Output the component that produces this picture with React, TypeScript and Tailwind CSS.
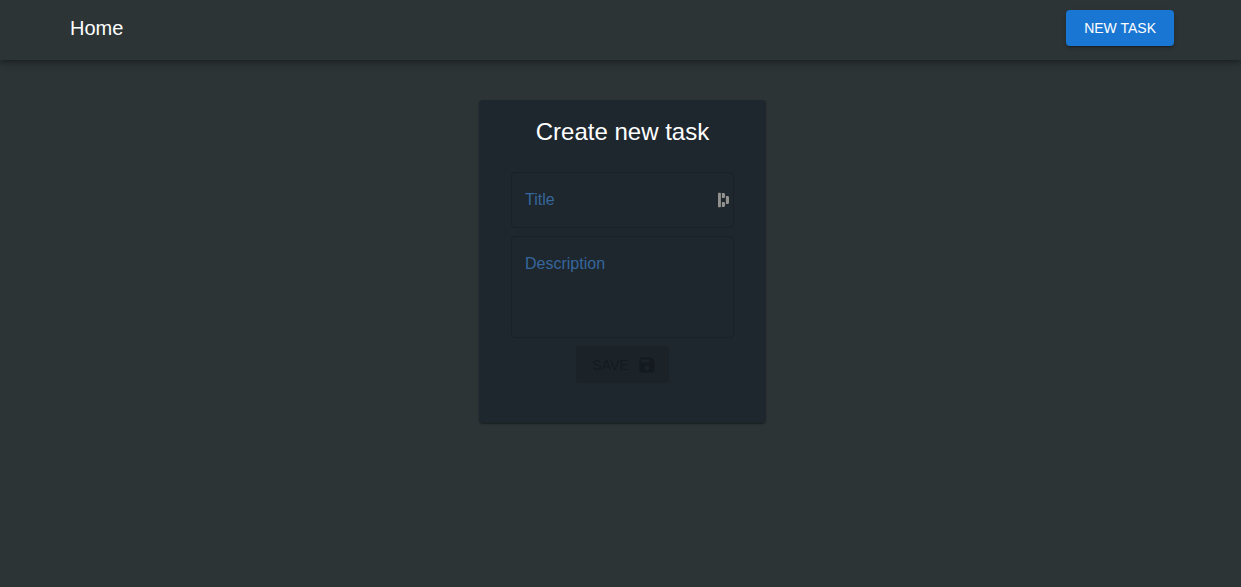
import { useState } from "react";
import type { FormEvent } from "react";

function Navbar() {
  return (
    <header className="bg-[#2d3436] pl-[3px] shadow-[0_2px_4px_-1px_rgba(0,0,0,0.2),0_4px_5px_0_rgba(0,0,0,0.14),0_1px_10px_0_rgba(0,0,0,0.12)]">
      <div className="mx-auto flex max-w-[1200px] items-start justify-between px-12 pt-2.5 pb-3.5">
        <a href="/" className="text-xl leading-9 text-white">
          Home
        </a>
        <button
          type="button"
          className="h-9 rounded bg-[#1976d2] px-[18px] text-sm font-normal text-white uppercase shadow-[0_3px_1px_-2px_rgba(0,0,0,0.2),0_2px_2px_0_rgba(0,0,0,0.14),0_1px_5px_0_rgba(0,0,0,0.12)]"
        >
          New task
        </button>
      </div>
    </header>
  );
}

function SaveIcon() {
  return (
    <svg viewBox="0 0 24 24" className="size-5" fill="currentColor" aria-hidden="true">
      <path d="M17 3H5c-1.11 0-2 .9-2 2v14c0 1.1.89 2 2 2h14c1.1 0 2-.9 2-2V7l-4-4zm-5 16c-1.66 0-3-1.34-3-3s1.34-3 3-3 3 1.34 3 3-1.34 3-3 3zm3-10H5V5h10v4z" />
    </svg>
  );
}

function AutofillIcon() {
  return (
    <svg viewBox="0 0 12 16" className="h-4 w-3" fill="#92918e" aria-hidden="true">
      <rect x="1" y="0.8" width="2.9" height="14.4" rx="0.4" />
      <path d="M4.9 1h2.2l.9.9v3.3l-.8.8H4.9z" />
      <path d="M4.9 10h2.3l.8.8v3.3l-.9.9H4.9z" />
      <path d="M8.9 4h2.2l.9.9v6.2l-.9.9H8.9z" />
    </svg>
  );
}

const fieldBox =
  "block w-full rounded border border-[#192026] bg-transparent px-[13px] text-base text-white placeholder:text-[#36669c] placeholder:opacity-100 focus:border-[#1976d2] focus:outline-none";

export default function App() {
  const [title, setTitle] = useState("");
  const [description, setDescription] = useState("");

  const onSubmit = (event: FormEvent) => {
    event.preventDefault();
  };

  return (
    <div className="min-h-screen bg-[#2d3436] font-['Liberation_Sans',Arial,sans-serif]">
      <Navbar />
      <main className="flex justify-center pt-10 pl-1">
        <section className="w-[287px] rounded bg-[#1e272e] px-8 pt-4 pb-10 shadow-[0_2px_1px_-1px_rgba(0,0,0,0.2),0_1px_1px_0_rgba(0,0,0,0.14),0_1px_3px_0_rgba(0,0,0,0.12)]">
          <h1 className="text-center text-2xl text-white">Create new task</h1>
          <form onSubmit={onSubmit} className="mt-6 flex flex-col gap-2">
            <div className="relative">
              <input
                aria-label="Title"
                placeholder="Title"
                value={title}
                onChange={(event) => setTitle(event.target.value)}
                className={`${fieldBox} h-14`}
              />
              <span className="pointer-events-none absolute inset-y-0 right-[5px] flex items-center">
                <AutofillIcon />
              </span>
            </div>
            <textarea
              aria-label="Description"
              placeholder="Description"
              value={description}
              onChange={(event) => setDescription(event.target.value)}
              className={`${fieldBox} h-[102px] resize-none py-[15px]`}
            />
            <button
              type="submit"
              disabled={!title || !description}
              className="flex h-[37px] items-center gap-2 self-center rounded bg-[#1976d2] pr-3 pl-4 text-sm text-white uppercase disabled:bg-[#1b2329] disabled:text-[#141a1f]"
            >
              Save
              <SaveIcon />
            </button>
          </form>
        </section>
      </main>
    </div>
  );
}
